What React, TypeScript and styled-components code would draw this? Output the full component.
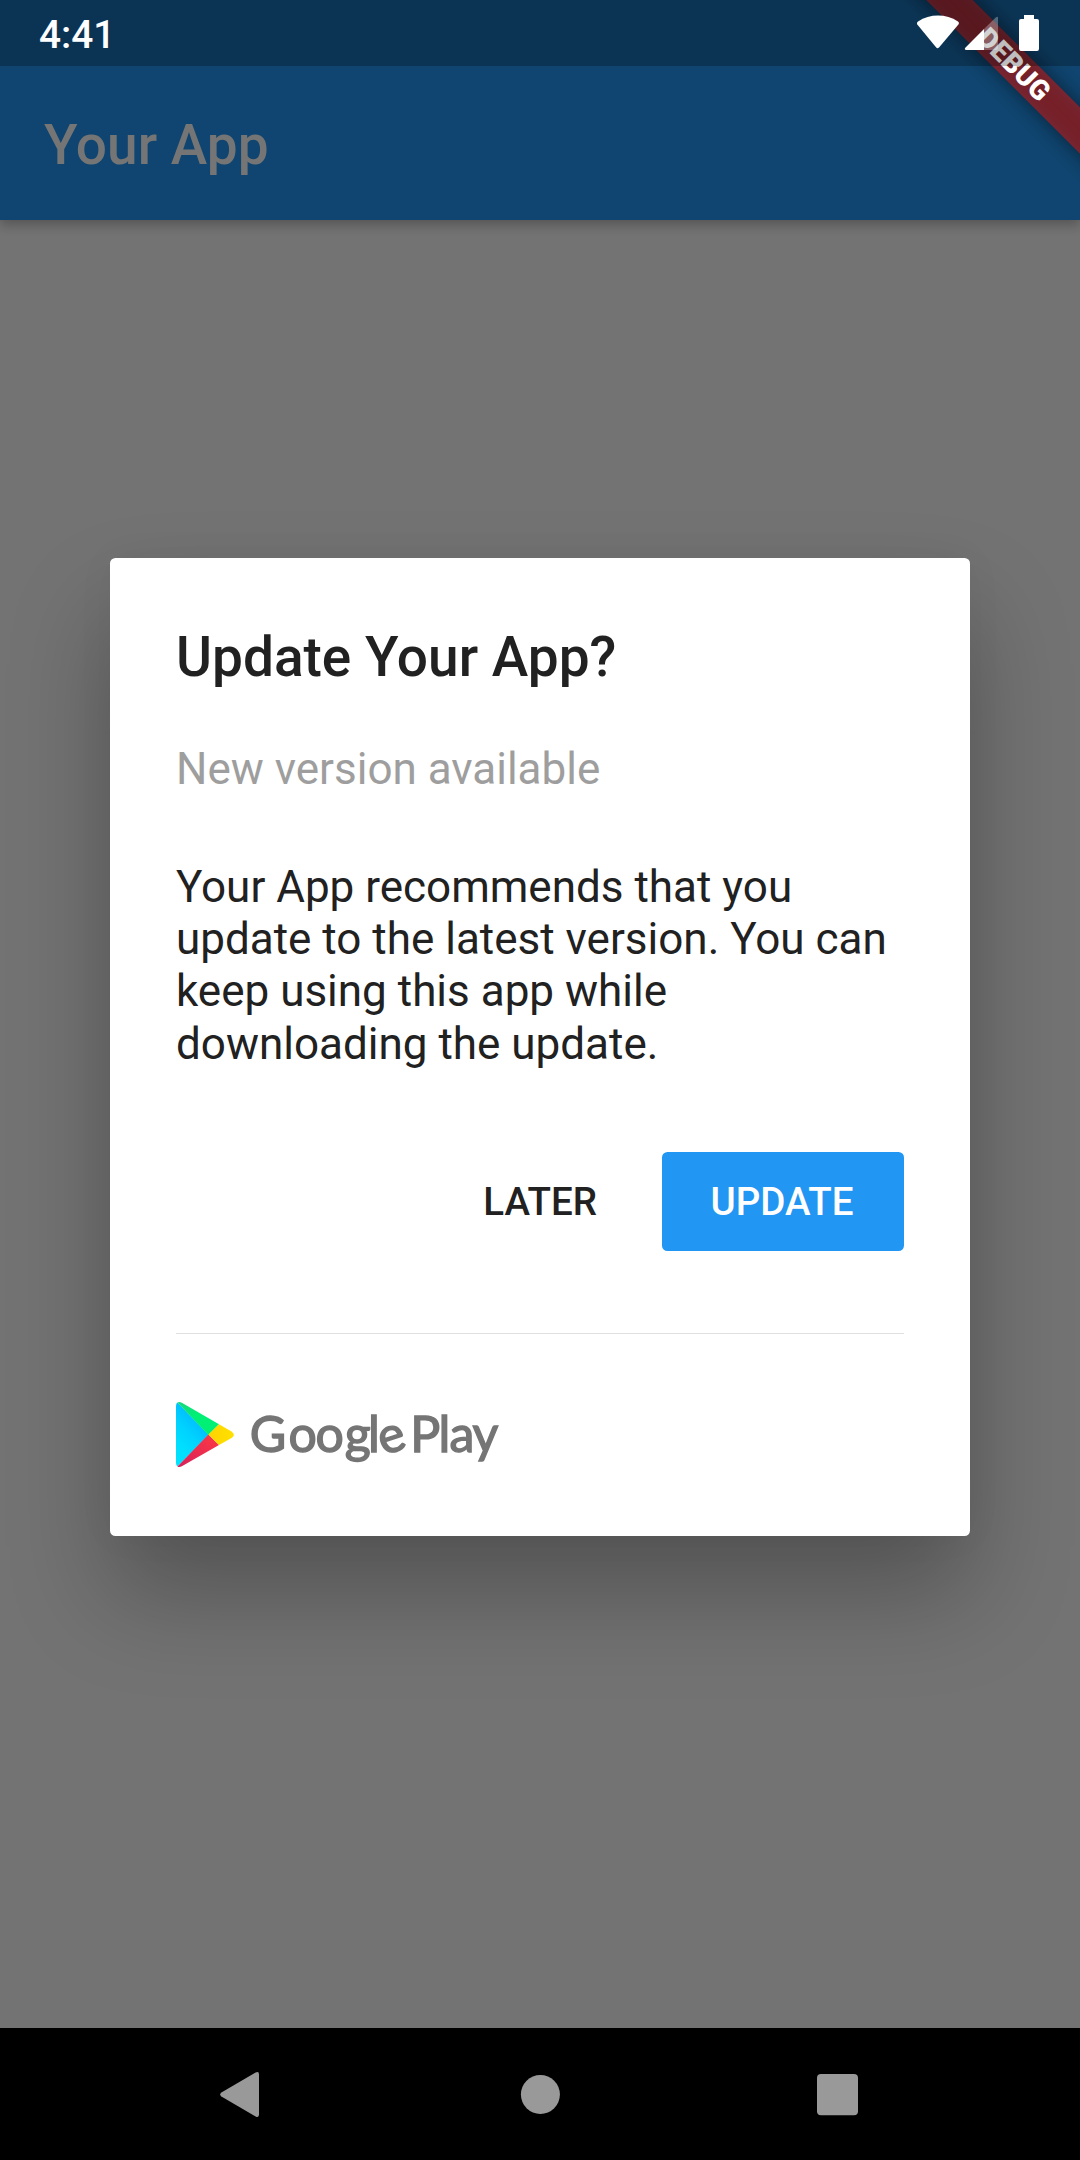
import React from "react";
import styled, { createGlobalStyle } from "styled-components";

const GlobalStyle = createGlobalStyle`
  * { box-sizing: border-box; }
  html, body { margin: 0; padding: 0; background: #737373; }
  body { font-family: Roboto, "Liberation Sans", sans-serif; }
`;

const Screen = styled.div`
  position: relative;
  display: flex;
  flex-direction: column;
  width: 1080px;
  height: 2160px;
  overflow: hidden;
  background: #737373;
`;

const AppBar = styled.header`
  display: flex;
  align-items: center;
  height: 220px;
  padding: 66px 44px 0;
  background: #0f4570;
  box-shadow: 0 5px 11px rgba(0, 0, 0, 0.2), 0 1px 14px rgba(0, 0, 0, 0.1);
`;

const AppTitle = styled.h1`
  margin: 0;
  padding-top: 5px;
  font-size: 55px;
  line-height: 65px;
  font-weight: 500;
  color: #757575;
`;

const BannerClip = styled.div`
  position: absolute;
  top: 0;
  right: 0;
  width: 220px;
  height: 220px;
  overflow: hidden;
`;

const Banner = styled.div`
  position: absolute;
  left: 4px;
  top: 48px;
  width: 300px;
  height: 33px;
  transform: rotate(45deg);

  &::before {
    content: "";
    position: absolute;
    inset: 0;
    background: rgba(0, 0, 0, 0.5);
    filter: blur(10px);
  }
`;

const BannerLabel = styled.div`
  position: relative;
  height: 33px;
  background: rgba(183, 28, 28, 0.627);
  color: #fff;
  font-size: 28px;
  line-height: 33px;
  font-weight: 900;
  text-align: center;
`;

const StatusBar = styled.div`
  position: absolute;
  inset: 0 0 auto 0;
  display: flex;
  align-items: center;
  justify-content: space-between;
  height: 66px;
  padding: 0 41px 0 39px;
  background: rgba(0, 0, 0, 0.25);
`;

const Clock = styled.span`
  padding-top: 4px;
  font-size: 38.8px;
  line-height: 46px;
  font-weight: 500;
  color: #fff;
`;

const Body = styled.main`
  flex: 1;
  display: flex;
  align-items: flex-start;
  justify-content: center;
  padding-top: 338px;
`;

const Dialog = styled.section`
  display: flex;
  flex-direction: column;
  width: 860px;
  height: 978px;
  padding: 67px 66px 60px;
  border-radius: 5.5px;
  background: #fff;
  box-shadow: 0 58px 100px rgba(0, 0, 0, 0.27), 0 0 40px rgba(0, 0, 0, 0.04);
`;

const DialogTitle = styled.h2`
  margin: 0;
  font-size: 55px;
  line-height: 65px;
  font-weight: 500;
  color: #212121;
`;

const Text = styled.p<{ $muted?: boolean; $top: number }>`
  margin: ${(p) => p.$top}px 0 0;
  font-size: 44px;
  line-height: 52.25px;
  color: ${(p) => (p.$muted ? "#9e9e9e" : "#212121")};
`;

const Actions = styled.div`
  display: flex;
  justify-content: flex-end;
  gap: 22px;
  margin-top: 82px;
`;

const Button = styled.button<{ $primary?: boolean }>`
  width: ${(p) => (p.$primary ? "242px" : "auto")};
  height: 99px;
  padding: ${(p) => (p.$primary ? "2px 2px 0 0" : "2px 43px 0")};
  border: 0;
  border-radius: 5.5px;
  background: ${(p) => (p.$primary ? "#2196f3" : "transparent")};
  color: ${(p) => (p.$primary ? "#fff" : "#212121")};
  font-family: inherit;
  font-size: 38.5px;
  line-height: 46px;
  font-weight: 500;
`;

const Divider = styled.hr`
  flex-shrink: 0;
  width: 100%;
  height: 1px;
  margin: 82px 0 0;
  border: 0;
  background: #e0e0e0;
`;

const PlayLogo = styled.svg`
  display: block;
  flex-shrink: 0;
  width: 330px;
  height: 72px;
  margin-top: 66.25px;
`;

const NavBar = styled.nav`
  display: grid;
  grid-template-columns: repeat(3, 298px);
  justify-content: center;
  justify-items: center;
  align-items: center;
  height: 132px;
  background: #000;
`;

const NavIcon = styled.svg`
  display: block;
  width: 60px;
  height: 60px;
  fill: #999;
`;

const StatusIcons = () => (
  <svg width="122" height="66" viewBox="917 0 122 66" fill="#fff">
    <path d="M917.3 24.5Q916.3 22.8 918 21.5C930 13.6 946 13.6 958 21.5Q959.6 22.8 958.4 24.5L939.2 47.3Q937.6 49 936 47.3Z" />
    <path d="M984 29V50H966.2Q964 49.6 965.3 47.7Z" />
    <path d="M984 29L996 17.2Q998 16.2 998 18V48Q998 50 996 50H984Z" opacity=".3" />
    <path d="M1024 15H1034V19H1037Q1039 19 1039 21V48.8Q1039 51 1037 51H1021Q1019 51 1019 48.8V21Q1019 19 1021 19H1024Z" />
  </svg>
);

const GooglePlay = () => (
  <PlayLogo viewBox="176 1400 330 72">
    <defs>
      <linearGradient id="blue" gradientUnits="userSpaceOnUse" x1="206" y1="1406" x2="163" y2="1449">
        <stop offset="0" stopColor="#00a0ff" />
        <stop offset="0.26" stopColor="#00beff" />
        <stop offset="0.51" stopColor="#00d2ff" />
        <stop offset="0.76" stopColor="#00dfff" />
        <stop offset="1" stopColor="#00e3ff" />
      </linearGradient>
      <linearGradient id="green" x1="0" y1="0" x2="0.6" y2="0.8">
        <stop offset="0" stopColor="#19d67c" />
        <stop offset="0.6" stopColor="#00f076" />
      </linearGradient>
      <linearGradient id="red" x1="1" y1="0" x2="0" y2="1">
        <stop offset="0" stopColor="#ff3a44" />
        <stop offset="1" stopColor="#d6205a" />
      </linearGradient>
      <linearGradient id="yellow" x1="1" y1="0" x2="0" y2="0">
        <stop offset="0" stopColor="#ffe000" />
        <stop offset="1" stopColor="#ffd400" />
      </linearGradient>
    </defs>
    <path d="M177.5 1402.6Q176 1403.6 176 1406V1463Q176 1465.4 177.5 1466.4L208.7 1434.7Z" fill="url(#blue)" />
    <path d="M177.5 1402.6Q179.2 1401.4 181.8 1402.8L219 1424.2L208.4 1435Z" fill="url(#green)" />
    <path d="M177.5 1466.4Q179.2 1467.6 181.8 1466.2L219 1445L208.4 1434.4Z" fill="url(#red)" />
    <path d="M219 1424.2L231.5 1431.4Q236.2 1434.7 231.5 1438L219 1445L208.4 1434.6Z" fill="url(#yellow)" />
    <text
      x="249.8 288.4 315.6 344.8 368 383.3 400 410.3 438.6 449.5 472.6"
      y="1452 1452 1452 1452 1452 1455.4 1452 1452 1452 1452 1452"
      rotate="0 0 0 0 0 -18 0 0 0 0 0"
      fill="#757575"
      stroke="#757575"
      strokeWidth="1.4"
      fontFamily="Lato, sans-serif"
      fontSize="50"
    >
      Google Play
    </text>
  </PlayLogo>
);

export default function App() {
  return (
    <>
      <GlobalStyle />
      <Screen>
        <AppBar>
          <AppTitle>Your App</AppTitle>
        </AppBar>
        <Body>
          <Dialog>
            <DialogTitle>Update Your App?</DialogTitle>
            <Text $muted $top={53}>New version available</Text>
            <Text $top={65.5}>
              Your App recommends that you update to the latest version. You can keep using this app while
              downloading the update.
            </Text>
            <Actions>
              <Button>LATER</Button>
              <Button $primary>UPDATE</Button>
            </Actions>
            <Divider />
            <GooglePlay />
          </Dialog>
        </Body>
        <NavBar>
          <NavIcon viewBox="212 2064 60 60">
            <path d="M255.6 2072.6Q259 2070.9 259 2074.5V2114.5Q259 2118.1 255.6 2116.4L221.4 2096.6Q219 2094.5 221.4 2092.4Z" />
          </NavIcon>
          <NavIcon viewBox="510 2064 60 60">
            <circle cx="540.4" cy="2094.5" r="19.5" />
          </NavIcon>
          <NavIcon viewBox="808 2064 60 60">
            <rect x="817" y="2074" width="41" height="41.3" rx="4" />
          </NavIcon>
        </NavBar>
        <BannerClip>
          <Banner>
            <BannerLabel>DEBUG</BannerLabel>
          </Banner>
        </BannerClip>
        <StatusBar>
          <Clock>4:41</Clock>
          <StatusIcons />
        </StatusBar>
      </Screen>
    </>
  );
}
